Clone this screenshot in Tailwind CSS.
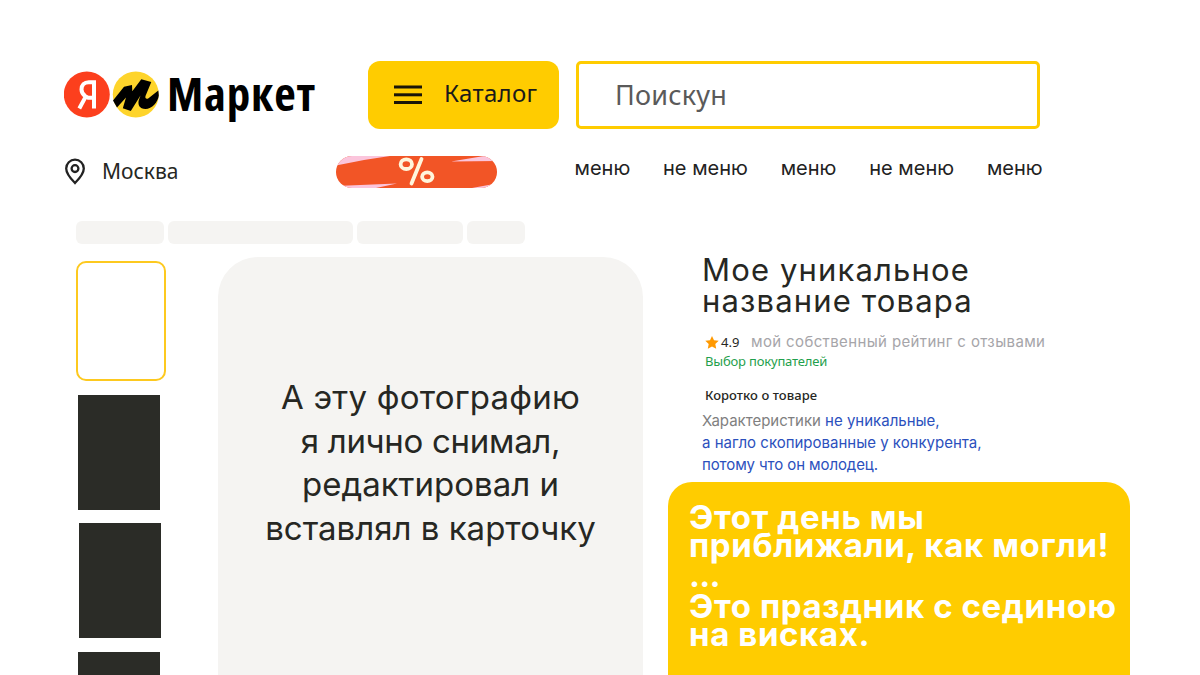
<!DOCTYPE html>
<html lang="ru">
<head>
  <meta charset="UTF-8" />
  <meta name="viewport" content="width=device-width, initial-scale=1.0" />
  <title>Маркет</title>
  <script src="https://cdn.jsdelivr.net/npm/@tailwindcss/browser@4"></script>
</head>
<body class="bg-white h-screen overflow-hidden whitespace-nowrap font-['Inter',sans-serif] text-[#262723]">

<header class="pt-[61px] pl-16">
  <div class="flex h-[68px]">
    <a class="flex w-[304px] text-black">
      <svg class="mt-2 h-[50px] w-[98px] shrink-0" viewBox="0 0 98 50">
        <circle cx="22.8" cy="25.5" r="23" fill="#fc3f1d" />
        <path d="M30 39.500V13.200h-5.200c-4.600 0-7.300 2.900-7.300 7.200 0 3.300 1.500 5.200 4.200 7.200L15.300 39.500M30 28.800h-5.800l-3-1.600" fill="none" stroke="#fff" stroke-width="4" />
        <circle cx="71.800" cy="25.500" r="23" fill="#fed42b" />
        <path d="M49 31.500 60 17.800 68 16 68.300 22.300 77.300 10.300 87.300 13 81.500 27C80.800 29.500 82.500 30.500 84.500 29.300L94.300 21.500 94.800 26.500C94 33 88 40 81.500 40 75.500 40 73.300 35.500 75 30.500L76.500 26.500 66.800 42 58.800 39.300 62 28.500 53 38.500Z" fill="#000" />
      </svg>
      <span class="ml-[5px] font-['Open_Sans',sans-serif] font-bold text-[47px] leading-[64px] tracking-[0.800px] [font-stretch:75%]">Маркет</span>
    </a>
    <button class="flex w-[191px] items-start rounded-[12px] bg-[#ffcc00] pl-[26px] text-[#1a1a1a]">
      <svg class="mt-[24px] h-[20px] w-7" viewBox="0 0 28 20" fill="#1a1508">
        <rect y="0.500" width="28" height="3" />
        <rect y="8.300" width="28" height="3" />
        <rect y="16" width="28" height="3" />
      </svg>
      <span class="ml-[22px] font-['Noto_Sans',sans-serif] text-[24px] leading-[64px] tracking-[0.300px]">Каталог</span>
    </button>
    <div class="ml-[17px] w-[464px] rounded-[5px] border-3 border-[#ffcc00] pl-[36px] font-['Noto_Sans',sans-serif] text-[27px] leading-[61px] tracking-[0.200px] text-[#5a5a5a]">Поискун</div>
  </div>

  <div class="mt-[25px] flex h-[34px] items-start">
    <div class="flex w-[272px]">
      <svg class="mt-1 h-[27px] w-[22px]" viewBox="0 0 22 27" fill="none" stroke="#222" stroke-width="2.300">
        <path d="M11 25C7.500 21.500 2.200 16 2.200 10.500a8.800 8.800 0 0 1 17.600 0C19.800 16 14.500 21.500 11 25Z" />
        <circle cx="11" cy="10.600" r="3.400" />
      </svg>
      <span class="ml-[16px] font-['Noto_Sans',sans-serif] text-[21px] leading-[34px]">Москва</span>
    </div>
    <svg class="mt-[2px] h-[32px] w-[161px]" viewBox="0 0 161 32">
      <clipPath id="pill"><rect width="161" height="32" rx="16" /></clipPath>
      <g clip-path="url(#pill)">
        <rect width="161" height="32" fill="#f25526" />
        <path d="M0 9.500 28 4 54 0H0ZM115 5.500 148 0H161V5ZM0 30 61 27.500 40 32H0ZM136 32 158 28V32Z" fill="#fbc5dc" />
      </g>
      <g fill="none" stroke="#fff6dc" stroke-width="3.800" stroke-linecap="round">
        <ellipse cx="70.300" cy="8.200" rx="5.700" ry="4.800" />
        <ellipse cx="91.300" cy="20.700" rx="5.200" ry="4.400" />
        <path d="M85.500 3 75.500 27.500" />
      </g>
    </svg>
    <nav class="ml-[77.500px] flex gap-[32.800px] text-[20px] leading-[28px] text-[#222]">
      <a>меню</a>
      <a>не меню</a>
      <a>меню</a>
      <a>не меню</a>
      <a>меню</a>
    </nav>
  </div>
</header>

<!-- breadcrumbs -->
<div class="mt-[33px] ml-[76px] flex h-[23px] gap-1">
  <div class="w-[88px] rounded-md bg-[#f5f4f2]"></div>
  <div class="w-[185px] rounded-md bg-[#f5f4f2]"></div>
  <div class="w-[106px] rounded-md bg-[#f5f4f2]"></div>
  <div class="w-[58px] rounded-md bg-[#f5f4f2]"></div>
</div>

<main class="mt-[13px] ml-[76px] flex h-[418px]">
  <!-- thumbnails -->
  <div class="mt-1 w-[90px]">
    <div class="h-[120px] rounded-[10px] border-2 border-[#fdc91f]"></div>
    <div class="mt-[14px] ml-[2px] h-[115px] w-[82px] bg-[#2b2c27]"></div>
    <div class="mt-[13px] ml-[3px] h-[115px] w-[82px] bg-[#2b2c27]"></div>
    <div class="mt-[14px] ml-[2px] h-[23px] w-[82px] bg-[#2b2c27]"></div>
  </div>

  <div class="ml-[52px] w-[425px] rounded-t-[40px] bg-[#f5f4f2] pt-[119px] text-center text-[33px] leading-[43.500px]">
    <span class="tracking-[0.200px]">А эту фотографию</span><br><span class="tracking-[-0.300px]">я лично снимал,</span><br>редактировал и<br>вставлял в карточку
  </div>

  <div class="ml-[25px] flex w-[462px] flex-col">
    <div class="flex h-[224.500px] flex-col pl-[34px]">
      <h1 class="-mt-[2px] text-[31px] leading-[30.500px] tracking-[1.150px]">Мое уникальное<br>название товара</h1>
      <div class="mt-[15px] flex h-[20px] pl-[3px]">
        <svg class="mt-[5px] h-[13px] w-[14px]" viewBox="0 0 14 13">
          <path d="M7 0 9 4.200 13.700 4.800 10.300 8 11.200 12.800 7 10.500 2.800 12.800 3.700 8 0.300 4.800 5 4.200Z" fill="#ff9900" />
        </svg>
        <span class="ml-[2px] w-[30px] font-['Noto_Sans',sans-serif] text-[13px] leading-[22px]">4.9</span>
        <span class="text-[15px] leading-[22px] tracking-[0.370px] text-[#a6a5a9]">мой собственный рейтинг с отзывами</span>
      </div>
      <p class="pl-[3px] font-['Noto_Sans',sans-serif] text-[13px] leading-[20px] tracking-[-0.180px] text-[#1fa04c]">Выбор покупателей</p>
      <h2 class="mt-[14px] pl-[3px] font-['Noto_Sans',sans-serif] text-[13px] leading-[20px] font-medium tracking-[0.050px]">Коротко о товаре</h2>
      <p class="mt-[5px] text-[15px] leading-[22px] text-[#2b50bd]"><span class="text-[#7f7f7f]">Характеристики</span> не уникальные,<br>а нагло скопированные у конкурента,<br><span class="tracking-[-0.100px]">потому что он молодец.</span></p>
    </div>
    <div class="flex-1 rounded-t-[24px] bg-[#ffcc00] pt-[21px] pl-[21px] text-[33px] leading-[28px] font-bold tracking-[0.600px] text-white">
      <p>Этот день мы<br>приближали, как могли!</p>
      <p class="leading-[33px] tracking-[-0.800px]">...</p>
      <p>Это праздник с сединою<br>на висках.</p>
    </div>
  </div>
</main>

</body>
</html>
